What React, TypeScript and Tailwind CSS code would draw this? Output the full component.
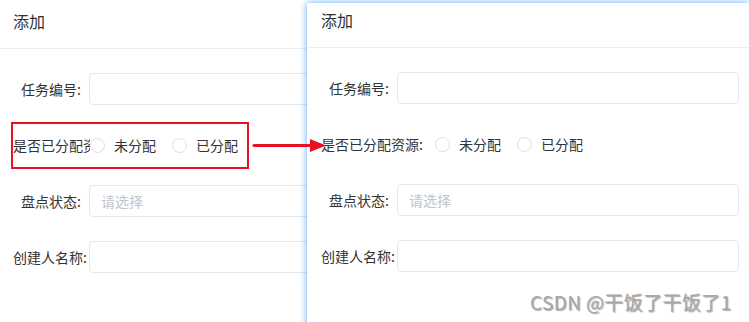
import React from "react";

type RowProps = { label: string; placeholder?: string };

function InputRow({ label, placeholder }: RowProps) {
  return (
    <div className="flex h-[32px] items-center">
      <div className="w-[76px] shrink-0 overflow-hidden whitespace-nowrap pr-[8px] text-right text-[14px] leading-[20px] text-[#333]">
        {label}
      </div>
      <div className="flex h-[32px] flex-1 items-center rounded-[4px] border border-[#e4e7ed] bg-white pl-[11px] text-[14px] text-[#c0c4cc]">
        {placeholder}
      </div>
    </div>
  );
}

function Radio({ text, first }: { text: string; first?: boolean }) {
  return (
    <div className={first ? "flex items-center" : "ml-[16px] flex items-center"}>
      <span className="h-[15px] w-[15px] rounded-full border border-[#dcdfe6] bg-white" />
      <span className="ml-[9px] text-[14px] leading-[20px] text-[#333]">{text}</span>
    </div>
  );
}

function FormPanel({ padLeft, wide }: { padLeft: string; wide: boolean }) {
  return (
    <div>
      <div className={`h-[45px] border-b border-[#ebeef5] pt-[5px] text-[16px] leading-[24px] text-[#303133] ${padLeft}`}>
        添加
      </div>
      <div className={`flex flex-col gap-[24px] pt-[24px] pr-[10px] ${padLeft}`}>
        <InputRow label="任务编号:" />
        <div className="flex h-[32px] items-center">
          {wide ? (
            <div className="w-[114px] shrink-0 whitespace-nowrap text-[14px] leading-[20px] text-[#333]">
              是否已分配资源:
            </div>
          ) : (
            <div className="w-[77px] shrink-0 overflow-hidden whitespace-nowrap text-[14px] leading-[20px] text-[#333]">
              是否已分配资源:
            </div>
          )}
          <Radio text="未分配" first />
          <Radio text="已分配" />
        </div>
        <InputRow label="盘点状态:" placeholder="请选择" />
        <InputRow label="创建人名称:" />
      </div>
    </div>
  );
}

export default function App() {
  return (
    <div className="relative h-[322px] w-[749px] overflow-hidden bg-white font-['Noto_Sans_CJK_SC',sans-serif]">
      <div className="flex">
        <div className="w-[307px] shrink-0 overflow-hidden pt-[4px]">
          <div className="w-[442px]">
            <FormPanel padLeft="pl-[13px]" wide={false} />
          </div>
        </div>
        <div className="relative z-10 mt-[3px] h-[330px] flex-1 bg-white shadow-[0_0_7px_rgba(80,160,255,0.95)]">
          <FormPanel padLeft="pl-[14px]" wide={true} />
        </div>
      </div>

      <div className="absolute left-[11px] top-[122px] z-20 h-[47px] w-[238px] border-2 border-[#e81123]" />

      <svg
        className="absolute left-[250px] top-[136px] z-20"
        width="80"
        height="20"
        viewBox="0 0 80 20"
      >
        <line x1="4" y1="9.5" x2="62" y2="9.5" stroke="#e81123" strokeWidth="3" strokeLinecap="round" />
        <polygon points="60,3 76,9.5 60,16" fill="#e81123" />
      </svg>

      <div className="absolute left-[530px] top-[291px] z-20 whitespace-nowrap text-[19px] leading-[22px] tracking-[0.4px] text-[#a8a8a8] [text-shadow:1px_1px_1px_rgba(0,0,0,0.35)]">
        CSDN @干饭了干饭了1
      </div>
    </div>
  );
}
